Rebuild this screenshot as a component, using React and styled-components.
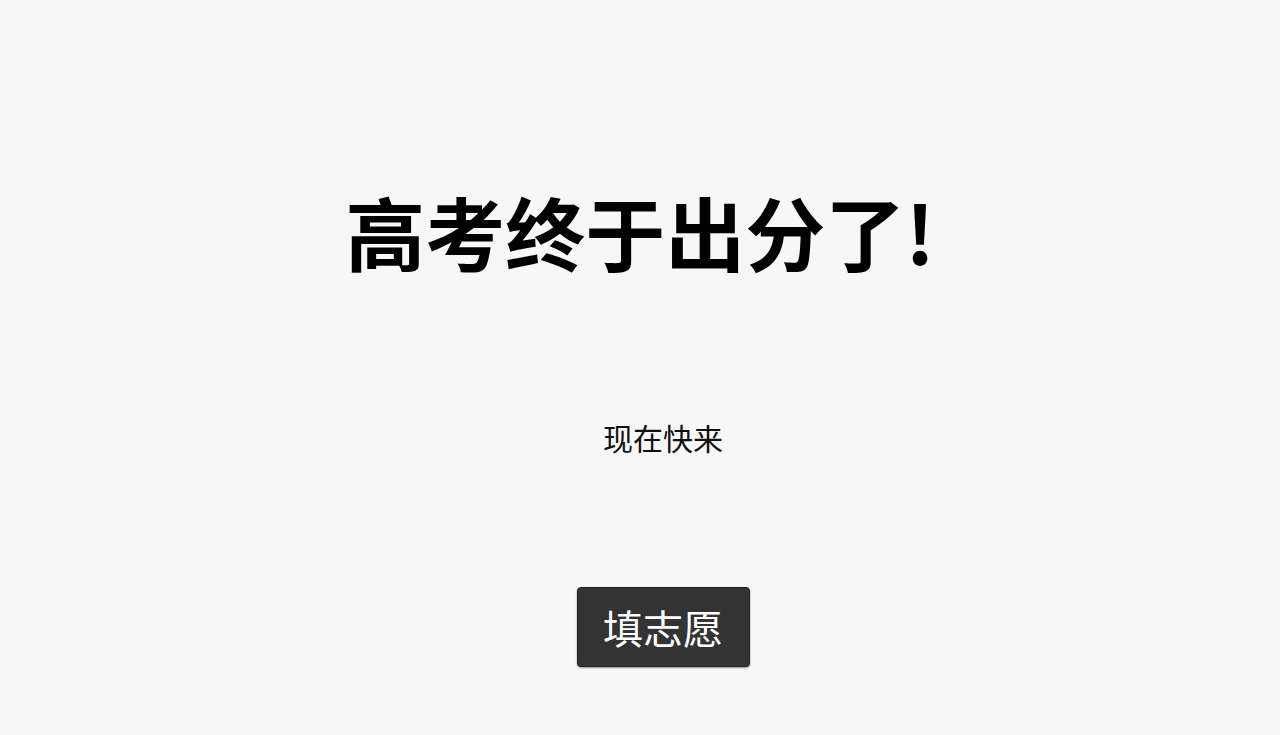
import React from "react";
import styled, { createGlobalStyle } from "styled-components";

const GlobalStyle = createGlobalStyle`
  html, body {
    margin: 0;
    padding: 0;
    background: #f7f7f7;
    font-family: "Noto Sans CJK SC", "Noto Sans", sans-serif;
  }
`;

const Page = styled.main`
  height: 735px;
  display: flex;
  flex-direction: column;
  align-items: center;
`;

const Title = styled.h1`
  margin: 182px 0 0;
  font-size: 80px;
  font-weight: 700;
  line-height: 96px;
  color: #000;
`;

const Lead = styled.p`
  margin: 139px 0 0 46px;
  font-size: 30px;
  line-height: 40px;
  color: #111;
`;

const Button = styled.button`
  margin: 130px 0 0 46px;
  width: 173px;
  height: 80px;
  padding: 0;
  background: #333;
  color: #fff;
  border: 1px solid #222;
  border-radius: 4px;
  box-shadow: 0 1px 2px rgba(0, 0, 0, 0.4);
  font-family: inherit;
  font-size: 40px;
  cursor: pointer;
`;

export default function App() {
  return (
    <>
      <GlobalStyle />
      <Page>
        <Title>高考终于出分了!</Title>
        <Lead>现在快来</Lead>
        <Button>填志愿</Button>
      </Page>
    </>
  );
}
